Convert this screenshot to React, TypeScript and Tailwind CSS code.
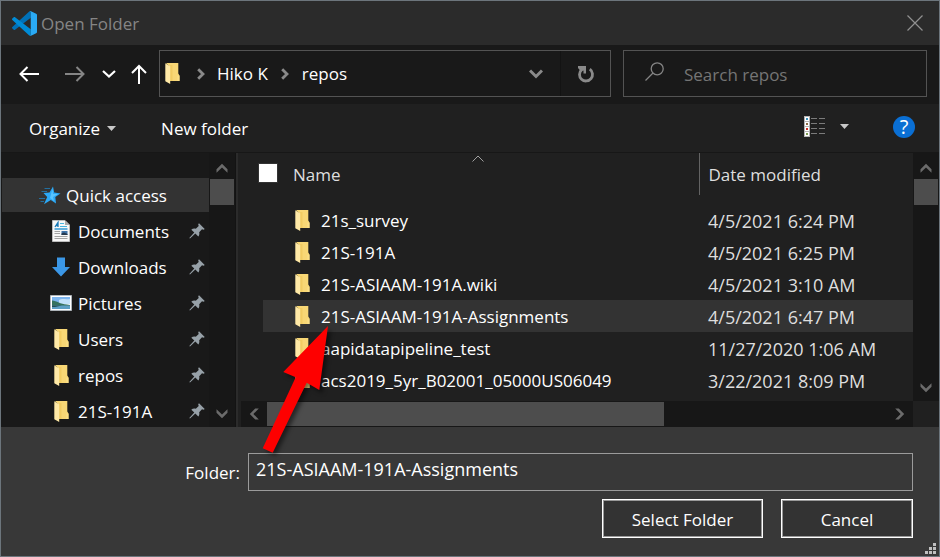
import type { ReactNode } from "react";

type Direction = "up" | "down" | "left" | "right";

const rotations: Record<Direction, string> = {
  up: "rotate(0 6 6)",
  right: "rotate(90 6 6)",
  down: "rotate(180 6 6)",
  left: "rotate(270 6 6)",
};

function ScrollChevron({ direction }: { direction: Direction }) {
  return (
    <svg width="12" height="12" viewBox="0 0 12 12" aria-hidden="true">
      <path
        d="M0.5 7.2 6 1.8 11.5 7.2V10.8L6 5.4 0.5 10.8Z"
        fill="#6b6b6b"
        transform={rotations[direction]}
      />
    </svg>
  );
}

function CrumbChevron() {
  return (
    <svg width="8" height="12" viewBox="0 0 8 12" fill="none" stroke="#8a8a8a" strokeWidth="2.8" aria-hidden="true">
      <path d="M1.2 1.2 6 6 1.2 10.8" />
    </svg>
  );
}

function FolderIcon() {
  return (
    <svg width="15" height="21" viewBox="0 0 15 21" className="shrink-0" aria-hidden="true">
      <path d="M1 0H13.3V10.5L14.5 12.5V18H5V4Z" fill="#f8d775" />
      <path d="M5 2H7.5V18H5Z" fill="#f2cc63" />
      <path d="M0.3 0.3 5.2 3.2V21L0.3 18.2Z" fill="#ffe9a6" />
      <path d="M12.3 12.6H14.5V18H12.3Z" fill="#fbdf86" />
    </svg>
  );
}

function CodeLogo() {
  return (
    <svg width="25" height="25" viewBox="0 0 100 100" aria-hidden="true">
      <path d="M75 1 69 2 1.400 63.600C-0.500 65.500-0.500 68 1.400 69.700L6.900 74.800C8.500 76 10.500 76 12.200 75L75 27.300Z" fill="#0071b8" />
      <path d="M75 99 69 98 1.400 36.400C-0.500 34.500-0.500 32 1.400 30.300L6.900 25.200C8.500 24 10.500 24 12.200 25L75 72.700Z" fill="#008bd6" />
      <path d="M69 98C72 101 75 99 75.900 99.100L96.500 89.200C99 88 100 86 100 83.600V16.400C100 14 99 12 96.500 10.800L75.900 0.900C73 0 71 0 69 2C72 0 75 2 75 5V95C75 98 72 100 69 98Z" fill="#2aaaf5" />
    </svg>
  );
}

function StarIcon() {
  return (
    <svg width="22" height="19" viewBox="0 0 22 19" aria-hidden="true">
      <path d="M14 0.500 15.200 6.500 21.500 7.500 16.300 11 17 17.500 11.800 14 5 18.300 8.200 11 4.500 7 10.500 6.500Z" fill="#2ca8f5" />
      <path d="M13.500 3 14 8 19 8 14 11 15 15 11 12Z" fill="#58c4ff" />
      <path d="M5.500 2.500H11M2.500 5.500H8M0 12.500H6M1.500 15.500H5" stroke="#236f9f" />
    </svg>
  );
}

function DocumentIcon() {
  return (
    <svg width="18" height="22" viewBox="0 0 18 22" aria-hidden="true">
      <path d="M0.500 0.500H13L17.500 5V21.500H0.500Z" fill="#f7f7f7" stroke="#bdbdbd" />
      <path d="M13 0.500V5H17.500Z" fill="#a9a9a9" />
      <path d="M3 7 6 2.500V7M4 5.500H6" stroke="#1679b8" fill="none" strokeWidth="1.300" />
      <path d="M8 3.500H12M8 6.500H15" stroke="#49b5df" />
      <path d="M2.500 9H15.500" stroke="#168cd0" strokeWidth="1.300" />
      <path d="M2.500 11.500H8M2.500 13.500H8M2.500 16.500H15.500M2.500 18.500H15.500" stroke="#a3a3a3" />
      <path d="M9.500 11H15.500V15H9.500Z" fill="#3e72a8" />
      <path d="M9.500 13.500 12 12.500 15.500 14V15H9.500Z" fill="#26384c" />
    </svg>
  );
}

function DownloadIcon() {
  return (
    <svg width="18" height="20" viewBox="0 0 18 20" aria-hidden="true">
      <path d="M5 0.500H13V10H18L9 19.500 0 10H5Z" fill="#3b97e6" />
    </svg>
  );
}

function PictureIcon() {
  return (
    <svg width="22" height="16" viewBox="0 0 22 16" aria-hidden="true">
      <path d="M0.500 0.500H21.500V15.500H0.500Z" fill="#fff" stroke="#adb3b8" />
      <path d="M2 2H20V9H2Z" fill="#7eb6ef" />
      <path d="M9 5C12 3 15 5 20 4V9H9Z" fill="#c3e2fa" />
      <path d="M2 5.500C7 6 10 9 17 9.500L20 10V11H2Z" fill="#36735e" />
      <path d="M2 10.500H20V14H2Z" fill="#5d9fc4" />
      <path d="M2 10.500H12L5 12H2Z" fill="#244f52" />
    </svg>
  );
}

function PinIcon() {
  return (
    <svg width="16" height="16" viewBox="0 0 16 16" className="shrink-0" aria-hidden="true">
      <path d="M10 0.300 15.700 6 14.700 6.800 13 6.300 10.200 9.200C10.600 11 10.200 12.500 9.300 13.500L6.300 10.600 1 15.500 0.300 14.900 5.300 9.600 2.300 6.700C3.500 5.600 5 5.400 6.800 5.700L9.700 3 9.200 1.300Z" fill="#97a1a8" />
    </svg>
  );
}

function Caret() {
  return (
    <svg width="9" height="5" viewBox="0 0 9 5" aria-hidden="true">
      <path d="M0 0H9L4.500 5Z" fill="#c8c8c8" />
    </svg>
  );
}

const thumbs = ["#3b93bd", "#8a6a45", "#d12d22", "#7d9a53"];

function ViewIcon() {
  return (
    <svg width="22" height="21" viewBox="0 0 22 21" aria-hidden="true">
      <rect width="6" height="21" fill="#b5b5b5" />
      {thumbs.map((color, i) => (
        <g key={color}>
          <rect x="1" y={1 + i * 5} width="4" height="4" fill="#fff" />
          <rect x="2" y={2 + i * 5} width="2" height="2" fill={color} />
          <path d={`M7 ${2.5 + i * 5}H13M15 ${2.5 + i * 5}H21`} stroke="#7b7b7b" />
        </g>
      ))}
    </svg>
  );
}

function TitleBar() {
  return (
    <header className="flex h-11 shrink-0 items-center bg-[#2b2b2b] pr-4 pl-[11px]">
      <CodeLogo />
      <h1 className="ml-1 flex-1 pt-px text-[#858585]">Open Folder</h1>
      <button type="button" aria-label="Close">
        <svg width="16" height="16" viewBox="0 0 16 16" stroke="#909090" strokeWidth="1.200" aria-hidden="true">
          <path d="M0.500 0.500 15.500 15.500M15.500 0.500 0.500 15.500" />
        </svg>
      </button>
    </header>
  );
}

function NavButton({ label, className, children }: { label: string; className: string; children: ReactNode }) {
  return (
    <button type="button" aria-label={label} className={`flex h-full shrink-0 items-center justify-center ${className}`}>
      {children}
    </button>
  );
}

function NavigationBar() {
  return (
    <div className="flex h-[59px] shrink-0 bg-[#191919] pt-[5px] pr-3 pb-[7px] pl-2">
      <NavButton label="Back" className="w-10">
        <svg width="20" height="16" viewBox="0 0 20 16" fill="none" stroke="#fff" strokeWidth="2" aria-hidden="true">
          <path d="M20 8H1.500M8.500 1 1.500 8 8.500 15" />
        </svg>
      </NavButton>
      <NavButton label="Forward" className="ml-1.5 w-10">
        <svg width="20" height="16" viewBox="0 0 20 16" fill="none" stroke="#858585" strokeWidth="2" aria-hidden="true">
          <path d="M0 8H18.500M11.500 1 18.500 8 11.500 15" />
        </svg>
      </NavButton>
      <NavButton label="Recent locations" className="w-7">
        <svg width="14" height="8" viewBox="0 0 14 8" fill="none" stroke="#fff" strokeWidth="2.200" aria-hidden="true">
          <path d="M1 1 7 6.500 13 1" />
        </svg>
      </NavButton>
      <NavButton label="Up" className="mr-1 w-8">
        <svg width="16" height="20" viewBox="0 0 16 20" fill="none" stroke="#fff" strokeWidth="2" aria-hidden="true">
          <path d="M8 20V2M1 9 8 2 15 9" />
        </svg>
      </NavButton>
      <nav aria-label="Address" className="flex flex-1 items-center border border-[#535353] pl-[5px]">
        <FolderIcon />
        <span className="ml-[17px]">
          <CrumbChevron />
        </span>
        <button type="button" className="ml-3">Hiko K</button>
        <span className="ml-[13px]">
          <CrumbChevron />
        </span>
        <button type="button" className="ml-[13px]">repos</button>
        <button type="button" aria-label="Previous locations" className="ml-auto flex h-full w-12 items-center justify-center">
          <svg width="14" height="10" viewBox="0 0 14 10" fill="none" stroke="#8a8a8a" strokeWidth="3" aria-hidden="true">
            <path d="M1 1.500 7 7.500 13 1.500" />
          </svg>
        </button>
        <button type="button" aria-label="Refresh" className="flex h-full w-[50px] items-center justify-center border-l border-[#131313]">
          <svg width="18" height="18" viewBox="0 0 18 18" fill="none" aria-hidden="true">
            <path d="M12.800 4.200A6.500 6.500 0 1 1 4.600 4.700" stroke="#8a8a8a" strokeWidth="2.800" />
            <path d="M1 1H9V8.500H6.500V5.500L4 6.500 1 3Z" fill="#8a8a8a" />
          </svg>
        </button>
      </nav>
      <div className="ml-3 flex w-[304px] items-center border border-[#535353] pl-[21px]">
        <svg width="19" height="19" viewBox="0 0 19 19" fill="none" stroke="#858585" strokeWidth="1.300" className="mb-1 shrink-0" aria-hidden="true">
          <circle cx="12.200" cy="6.800" r="6" />
          <path d="M8 11 0.500 18.500" />
        </svg>
        <input
          type="search"
          aria-label="Search repos"
          placeholder="Search repos"
          className="ml-5 w-full min-w-0 bg-transparent pt-0.5 placeholder:text-[#757575]"
        />
      </div>
    </div>
  );
}

function Toolbar() {
  return (
    <div className="flex h-12 shrink-0 items-center bg-[#202020] pr-6 pl-7">
      <button type="button" className="flex items-center gap-[7px]">
        <span className="pt-0.5">Organize</span>
        <Caret />
      </button>
      <button type="button" className="ml-[45px] pt-0.5">New folder</button>
      <button type="button" aria-label="Change view" className="ml-auto flex items-center gap-3.5 pb-1">
        <ViewIcon />
        <Caret />
      </button>
      <button type="button" aria-label="Help" className="mb-0.5 ml-11 flex size-[22px] items-center justify-center rounded-full bg-[#0a6fd4] text-xl leading-none">
        ?
      </button>
    </div>
  );
}

const places: { name: string; icon: ReactNode }[] = [
  { name: "Documents", icon: <DocumentIcon /> },
  { name: "Downloads", icon: <DownloadIcon /> },
  { name: "Pictures", icon: <PictureIcon /> },
  { name: "Users", icon: <FolderIcon /> },
  { name: "repos", icon: <FolderIcon /> },
  { name: "21S-191A", icon: <FolderIcon /> },
];

function VerticalScrollbar() {
  return (
    <div className="flex w-[26px] shrink-0 flex-col items-center bg-[#171717]" aria-hidden="true">
      <div className="flex h-[26px] items-center pt-1">
        <ScrollChevron direction="up" />
      </div>
      <div className="h-[26px] w-6 bg-[#4d4d4d]" />
      <div className="mt-auto flex h-[26px] items-center">
        <ScrollChevron direction="down" />
      </div>
    </div>
  );
}

function Sidebar() {
  return (
    <aside className="flex w-[235px] shrink-0 border-r border-[#131313] bg-[#191919]">
      <ul className="min-w-0 flex-1 overflow-hidden pt-[25px] pl-px">
        <li className="flex h-[34px] items-center bg-[#333] pl-[37px]">
          <StarIcon />
          <button type="button" className="ml-[5px] pt-0.5">Quick access</button>
        </li>
        <li className="pt-px">
          <ul>
            {places.map(({ name, icon }) => (
              <li key={name} className="flex h-9 items-center pr-1 pl-12">
                <span className="flex w-[22px] shrink-0 justify-center">{icon}</span>
                <button type="button" className="ml-1.5 pt-0.5">{name}</button>
                <span className="ml-auto">
                  <PinIcon />
                </span>
              </li>
            ))}
          </ul>
        </li>
      </ul>
      <VerticalScrollbar />
    </aside>
  );
}

const folders = [
  { name: "21s_survey", modified: "4/5/2021 6:24 PM" },
  { name: "21S-191A", modified: "4/5/2021 6:25 PM" },
  { name: "21S-ASIAAM-191A.wiki", modified: "4/5/2021 3:10 AM" },
  { name: "21S-ASIAAM-191A-Assignments", modified: "4/5/2021 6:47 PM", selected: true },
  { name: "aapidatapipeline_test", modified: "11/27/2020 1:06 AM" },
  { name: "acs2019_5yr_B02001_05000US06049", modified: "3/22/2021 8:09 PM" },
];

function FileTable() {
  return (
    <table className="w-full table-fixed border-collapse text-left">
      <colgroup>
        <col className="w-[23px]" />
        <col />
        <col className="w-[214px]" />
      </colgroup>
      <thead className="text-[#dedede]">
        <tr className="h-[42px]">
          <th colSpan={2} className="p-0 font-normal">
            <div className="relative ml-[18px] flex h-[42px] items-center">
              <svg width="12" height="7" viewBox="0 0 12 7" fill="none" stroke="#a0a0a0" className="absolute top-0.5 left-1/2 -translate-x-1/2" aria-hidden="true">
                <path d="M0.500 6.500 6 1 11.500 6.500" />
              </svg>
              <input type="checkbox" aria-label="Select all" className="mb-0.5 size-5 appearance-none border border-[#333] bg-white" />
              <span className="ml-[15px] pt-0.5">Name</span>
            </div>
          </th>
          <th className="border-l border-[#636363] p-0 pt-0.5 pl-[9px] font-normal">Date modified</th>
        </tr>
      </thead>
      <tbody>
        <tr className="h-[9px]" aria-hidden="true">
          <td colSpan={3} className="p-0" />
        </tr>
        {folders.map(({ name, modified, selected }) => (
          <tr key={name} className="h-8">
            <td className="p-0" />
            <td className={selected ? "bg-[#333] p-0" : "p-0"}>
              <div className="flex items-center gap-[11px] pl-8 whitespace-nowrap">
                <FolderIcon />
                <span className="pt-0.5">{name}</span>
              </div>
            </td>
            <td className={`p-0 pt-0.5 pl-[9px] text-lg leading-6 text-[#dedede] ${selected ? "bg-[#333]" : ""}`}>{modified}</td>
          </tr>
        ))}
      </tbody>
    </table>
  );
}

function FilePane() {
  return (
    <main className="flex min-w-0 flex-1 flex-col border-l-2 border-[#2b2b2b] bg-[#202020]">
      <div className="flex min-h-0 flex-1">
        <div className="min-w-0 flex-1 overflow-hidden pl-0.5">
          <FileTable />
        </div>
        <VerticalScrollbar />
      </div>
      <div className="mr-[26px] ml-[3px] flex h-[26px] shrink-0 items-center bg-[#171717]" aria-hidden="true">
        <div className="flex w-[26px] justify-center">
          <ScrollChevron direction="left" />
        </div>
        <div className="h-6 flex-1">
          <div className="h-full w-[64%] bg-[#4d4d4d]" />
        </div>
        <div className="flex w-[26px] justify-center">
          <ScrollChevron direction="right" />
        </div>
      </div>
    </main>
  );
}

const actionClass = "h-[39px] border border-white bg-[#333] pt-0.5 shadow-[inset_0_0_0_1px_#999]";

function Footer() {
  return (
    <form className="relative shrink-0 bg-[#383838] pt-[26px] pr-[26px] pb-[18px]" onSubmit={(e) => e.preventDefault()}>
      <div className="flex items-center">
        <label htmlFor="folder" className="w-[239px] shrink-0 pt-0.5 text-right">Folder:</label>
        <input
          id="folder"
          type="text"
          defaultValue="21S-ASIAAM-191A-Assignments"
          className="ml-2 h-[38px] min-w-0 flex-1 border border-[#9b9b9b] bg-transparent px-[7px] pb-1.5 text-lg leading-6"
        />
      </div>
      <div className="mt-2 flex justify-end gap-[18px]">
        <button type="submit" className={`w-[161px] ${actionClass}`}>Select Folder</button>
        <button type="button" className={`w-[132px] ${actionClass}`}>Cancel</button>
      </div>
      <svg width="11" height="11" viewBox="0 0 11 11" fill="#bfbfbf" className="absolute right-[3px] bottom-0.5" aria-hidden="true">
        <path d="M8 0h3v3H8zM4 4h3v3H4zM8 4h3v3H8zM0 8h3v3H0zM4 8h3v3H4zM8 8h3v3H8z" />
      </svg>
    </form>
  );
}

function PointerArrow() {
  return (
    <svg width="80" height="140" viewBox="0 0 80 140" className="pointer-events-none absolute top-[319px] left-[257px] drop-shadow-[3px_3px_2px_rgba(0,0,0,0.5)]" aria-hidden="true">
      <path d="M70 6 25.300 52 37.700 57.300 4.700 128.300 14.700 132.700 48.700 62.700 61.300 70Z" fill="#fe0000" />
    </svg>
  );
}

export default function App() {
  return (
    <div className="relative flex h-screen flex-col border border-[#6c757c] bg-[#202020] font-['Open_Sans','Noto_Sans',sans-serif] text-[17px] leading-6 text-white">
      <TitleBar />
      <NavigationBar />
      <Toolbar />
      <div className="flex min-h-0 flex-1 border-t border-[#171717]">
        <Sidebar />
        <FilePane />
      </div>
      <Footer />
      <PointerArrow />
    </div>
  );
}
